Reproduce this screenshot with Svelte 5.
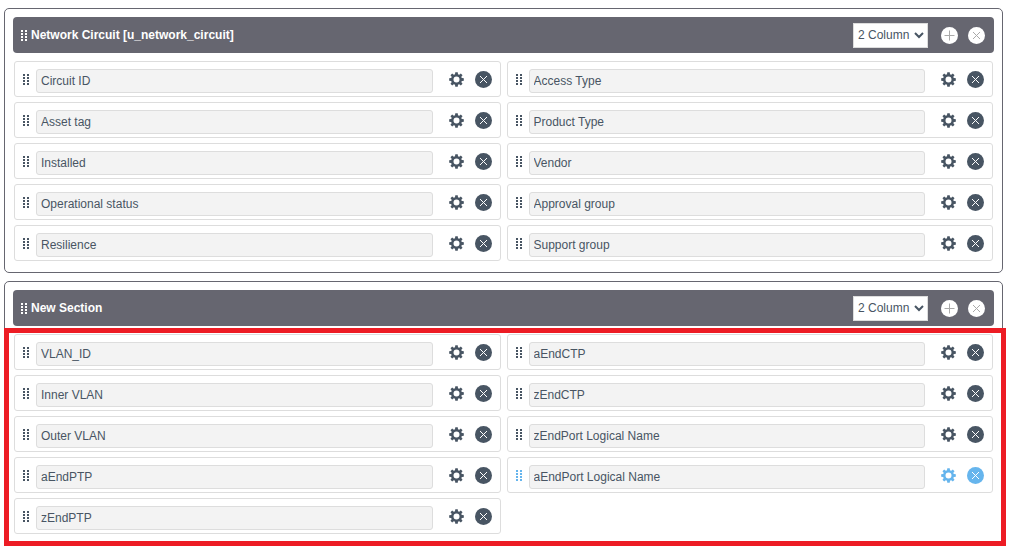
<script lang="ts">
	interface Field {
		label: string;
		selected?: boolean;
	}

	interface Section {
		title: string;
		columns: string;
		highlighted: boolean;
		fields: Field[][];
	}

	let sections: Section[] = $state([
		{
			title: 'Network Circuit [u_network_circuit]',
			columns: '2',
			highlighted: false,
			fields: [
				[
					{ label: 'Circuit ID' },
					{ label: 'Asset tag' },
					{ label: 'Installed' },
					{ label: 'Operational status' },
					{ label: 'Resilience' }
				],
				[
					{ label: 'Access Type' },
					{ label: 'Product Type' },
					{ label: 'Vendor' },
					{ label: 'Approval group' },
					{ label: 'Support group' }
				]
			]
		},
		{
			title: 'New Section',
			columns: '2',
			highlighted: true,
			fields: [
				[
					{ label: 'VLAN_ID' },
					{ label: 'Inner VLAN' },
					{ label: 'Outer VLAN' },
					{ label: 'aEndPTP' },
					{ label: 'zEndPTP' }
				],
				[
					{ label: 'aEndCTP' },
					{ label: 'zEndCTP' },
					{ label: 'zEndPort Logical Name' },
					{ label: 'aEndPort Logical Name', selected: true }
				]
			]
		}
	]);

	function removeSection(index: number) {
		sections.splice(index, 1);
	}

	function addField(section: Section) {
		section.fields[0].push({ label: '' });
	}
</script>

{#snippet grip()}
	<svg class="grip" viewBox="0 0 6 11" aria-hidden="true">
		{#each [0, 3, 6, 9] as y}
			<rect x="0" {y} width="2" height="2" />
			<rect x="4" {y} width="2" height="2" />
		{/each}
	</svg>
{/snippet}

{#snippet cross()}
	<svg class="circle" viewBox="0 0 17 17" aria-hidden="true">
		<circle cx="8.5" cy="8.5" r="8.5" />
		<path d="M5 5l7 7M12 5l-7 7" />
	</svg>
{/snippet}

<main>
	{#each sections as section, i}
		<section class="section">
			<header>
				{@render grip()}
				<h2>{section.title}</h2>
				<select aria-label="Column layout" bind:value={section.columns}>
					<option value="1">1 Column</option>
					<option value="2">2 Column</option>
				</select>
				<div class="actions light">
					<button aria-label="Add field" onclick={() => addField(section)}>
						<svg class="circle" viewBox="0 0 17 17" aria-hidden="true">
							<circle cx="8.5" cy="8.5" r="8.5" />
							<path d="M8.5 3.5v10M3.5 8.5h10" />
						</svg>
					</button>
					<button aria-label="Remove section" onclick={() => removeSection(i)}>
						{@render cross()}
					</button>
				</div>
			</header>

			<div class="columns">
				{#each section.fields as column}
					<div class="column">
						{#each column as field, n}
							<div class="field" class:selected={field.selected}>
								{@render grip()}
								<input type="text" aria-label="Field name" bind:value={field.label} />
								<div class="actions">
									<button aria-label="Field settings">
										<svg class="gear" viewBox="0 0 16 16" aria-hidden="true">
											<circle cx="8" cy="8" r="4.5" />
											{#each [0, 45, 90, 135, 180, 225, 270, 315] as angle}
												<path d="M6.2 3.6L6.7 0.2h2.6L9.8 3.6z" transform="rotate({angle} 8 8)" />
											{/each}
										</svg>
									</button>
									<button aria-label="Remove field" onclick={() => column.splice(n, 1)}>
										{@render cross()}
									</button>
								</div>
							</div>
						{/each}
					</div>
				{/each}
			</div>

			{#if section.highlighted}
				<div class="highlight"></div>
			{/if}
		</section>
	{/each}
</main>

<style>
	:global(body) {
		background: #fff;
	}

	main {
		display: flex;
		flex-direction: column;
		gap: 8px;
		padding: 8px 6px 7px 4px;
		font-family: 'Liberation Sans', Arial, sans-serif;
		font-size: 12px;
		color: #485563;
	}

	.section {
		position: relative;
		padding: 8px 8px 11px;
		border: 1px solid #666670;
		border-radius: 5px;
	}

	header {
		display: flex;
		align-items: center;
		box-sizing: border-box;
		height: 36px;
		padding: 0 9px 0 8px;
		border-radius: 4px;
		background: #666670;
		color: #fff;
	}

	h2 {
		flex: 1;
		margin: 0 0 0 4px;
		font-size: 12px;
		line-height: 16px;
	}

	select {
		width: 75px;
		height: 25px;
		margin-right: 13px;
		padding: 0;
		border: 1px solid #ddd;
		border-radius: 0;
		background: #fff;
		color: #485563;
		font: inherit;
	}

	.columns {
		display: grid;
		grid-template-columns: 1fr 1fr;
		gap: 6px;
		padding: 8px 1px 0;
	}

	.column {
		display: flex;
		flex-direction: column;
		gap: 5px;
	}

	.field {
		display: flex;
		align-items: center;
		box-sizing: border-box;
		height: 36px;
		padding: 0 8px;
		border: 1px solid #ddd;
		border-radius: 3px;
	}

	input {
		flex: 1;
		box-sizing: border-box;
		min-width: 0;
		height: 24px;
		margin: 4px 16px 0 7px;
		padding: 0 4px;
		border: 1px solid #ddd;
		border-radius: 3px;
		background: #f3f3f3;
		color: #485563;
		font: inherit;
	}

	.actions {
		display: flex;
		align-items: center;
		gap: 11px;
	}

	.actions.light {
		gap: 10px;
	}

	button {
		display: flex;
		padding: 0;
		border: 0;
		background: none;
		color: inherit;
		cursor: pointer;
	}

	.grip {
		width: 6px;
		height: 11px;
		margin-top: 1px;
		fill: currentColor;
	}

	.circle {
		width: 17px;
		height: 17px;
		fill: currentColor;
		stroke: none;
	}

	.circle path {
		fill: none;
		stroke: #fff;
	}

	.light .circle path {
		stroke: #aaa;
	}

	.gear {
		width: 15px;
		height: 15px;
		fill: currentColor;
	}

	.gear circle {
		fill: none;
		stroke: currentColor;
		stroke-width: 2.6;
	}

	.selected .grip,
	.selected .actions {
		color: #66b5ed;
	}

	.highlight {
		position: absolute;
		inset: 46px -4px -1px -1px;
		border: 5px solid #ed1c24;
		pointer-events: none;
	}
</style>
